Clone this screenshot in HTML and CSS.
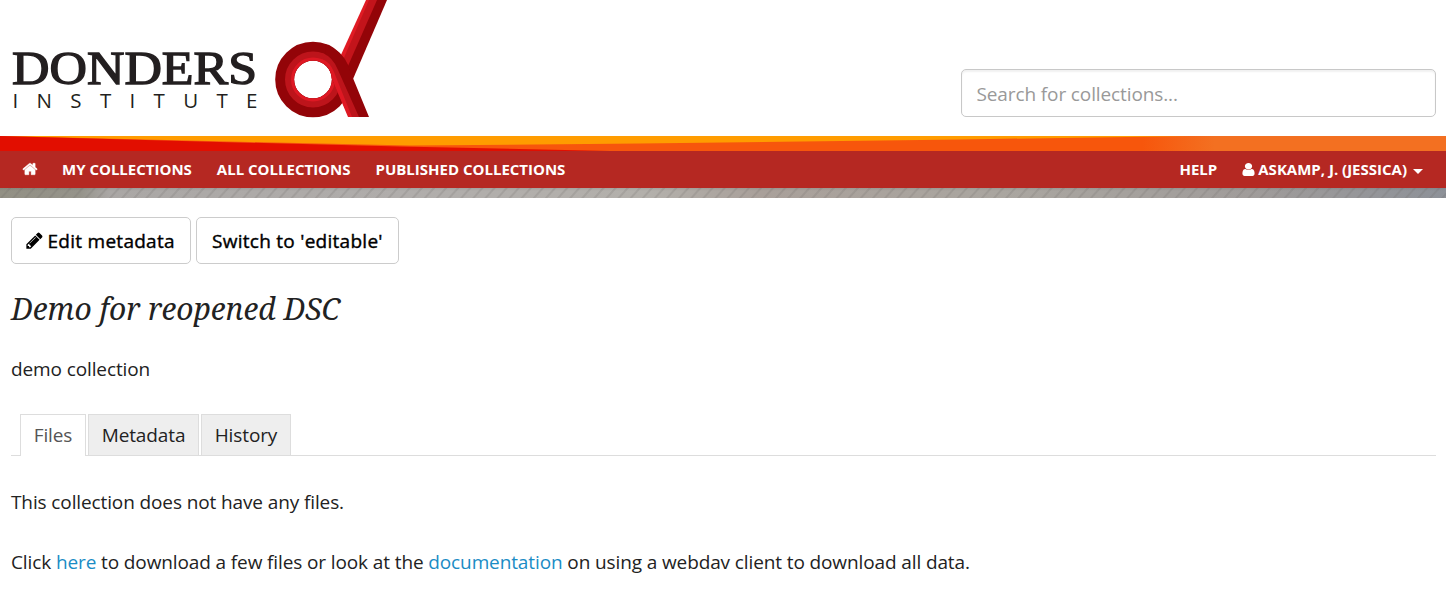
FILE: index.html
```html
<!DOCTYPE html>
<html lang="en">
<head>
<meta charset="utf-8">
<title>Demo for reopened DSC</title>
<link rel="stylesheet" href="styles.css">
</head>
<body>
<header class="masthead">
  <svg class="logo" width="400" height="136" viewBox="0 0 400 136" role="img" aria-label="Donders Institute">
    <text class="logo-name" x="12" y="83.5" textLength="245" lengthAdjust="spacingAndGlyphs">DONDERS</text>
    <text class="logo-sub" x="12.5" y="108" textLength="245">INSTITUTE</text>
    <path fill="#930408" d="M367 0H387L353 79L334 79Z"/>
    <path fill="#e01b24" d="M366 0H370L344 62L340 57Z"/>
    <path fill="#c3141b" d="M369 0H377L348 66L343 60Z"/>
    <circle cx="313" cy="79.5" r="28.3" fill="none" stroke="#930408" stroke-width="19"/>
    <circle cx="313" cy="79.5" r="23.5" fill="none" stroke="#bd141b" stroke-width="9"/>
    <circle cx="313" cy="79.5" r="20.5" fill="none" stroke="#de1823" stroke-width="3"/>
    <path fill="#930408" d="M325 44Q340 49 348 66L369 117H349L332 79Q332 71 326 65Z"/>
    <path fill="#bd141b" d="M322 53Q333 57 338 70L359 117H349L332 79Q332 71 325 64Z"/>
    <path fill="#de1823" d="M322 59Q330 62 334 72L352 117H348L332 79Q332 71 324 63Z"/>
  </svg>
  <input class="search" type="text" placeholder="Search for collections...">
</header>
<svg class="ribbon" width="1446" height="15" viewBox="0 0 1446 15" preserveAspectRatio="none">
  <defs>
    <linearGradient id="flame"><stop offset="0" stop-color="#f7560c"/><stop offset=".79" stop-color="#f7560c"/><stop offset=".84" stop-color="#f37021"/></linearGradient>
  </defs>
  <path fill="#ff9c00" d="M0 0H1200V15H0Z"/>
  <path fill="url(#flame)" d="M0 0L250 6L410 9.5L640 7.5L960 3.5L1190 0H1446V15H0Z"/>
  <path fill="#e20e00" d="M0 0L200 5.5L400 10.5L610 15H0Z"/>
</svg>
<nav class="navbar">
  <a class="home" href="#"><svg width="16" height="16" viewBox="0 0 1792 1792"><path fill="currentColor" stroke="currentColor" stroke-width="50" d="M1472 992v480q0 26-19 45t-45 19h-384v-384h-256v384h-384q-26 0-45-19t-19-45v-480q0-1 .5-3t.5-3l575-474 575 474q1 2 1 6zm223-69l-62 74q-8 9-21 11h-3q-13 0-21-7l-692-577-692 577q-12 8-24 7-13-2-21-11l-62-74q-8-10-7-23.5t11-21.5l719-599q32-26 76-26t76 26l244 204v-195q0-14 9-23t23-9h192q14 0 23 9t9 23v408l219 182q10 8 11 21.5t-7 23.5z"/></svg></a>
  <a href="#">MY COLLECTIONS</a>
  <a href="#">ALL COLLECTIONS</a>
  <a href="#">PUBLISHED COLLECTIONS</a>
  <a class="help" href="#">HELP</a>
  <a class="account" href="#"><svg width="17" height="15" viewBox="0 0 1792 1792" preserveAspectRatio="none"><path fill="currentColor" d="M1536 1399q0 109-62.5 187t-150.5 78h-854q-88 0-150.5-78t-62.5-187q0-85 8.5-160.5t31.5-152 58.5-131 94-89 134.5-34.5q131 128 313 128t313-128q76 0 134.5 34.5t94 89 58.5 131 31.5 152 8.5 160.5zm-256-887q0 159-112.5 271.5t-271.5 112.5-271.5-112.5-112.5-271.5 112.5-271.5 271.5-112.5 271.5 112.5 112.5 271.5z"/></svg><span>ASKAMP, J. (JESSICA)</span><i class="caret"></i></a>
</nav>
<div class="texture"></div>
<main class="content">
  <div class="actions">
    <button class="btn" type="button"><svg width="19" height="19" viewBox="0 0 1792 1792"><path d="M491 1536l91-91-235-235-91 91v107h128v128h107zm523-928q0-22-22-22-10 0-17 7l-542 542q-7 7-7 17 0 22 22 22 10 0 17-7l542-542q7-7 7-17zm-54-192l416 416-832 832h-416v-416zm683 96q0 53-37 90l-166 166-416-416 166-165q36-38 90-38 53 0 91 38l235 234q37 39 37 91z"/></svg><span>Edit metadata</span></button>
    <button class="btn switch" type="button">Switch to 'editable'</button>
  </div>
  <h1 class="title">Demo for reopened DSC</h1>
  <p class="description">demo collection</p>
  <div class="tabs">
    <a class="tab active" href="#">Files</a>
    <a class="tab metadata" href="#">Metadata</a>
    <a class="tab history" href="#">History</a>
  </div>
  <p class="text">This collection does not have any files.</p>
  <p class="text">Click <a href="#">here</a> to download a few files or look at the <a href="#">documentation</a> on using a webdav client to download all data.</p>
</main>
</body>
</html>
```
FILE: styles.css
```css
* { box-sizing: border-box; }
body {
  margin: 0;
  background: #fff;
  color: #222;
  font: 19px/30px "Open Sans", "Noto Sans", sans-serif;
  letter-spacing: -0.115px;
}
a { color: #1a8cc5; text-decoration: none; }
svg { display: block; flex: none; }
.masthead {
  display: flex;
  justify-content: space-between;
  height: 136px;
  padding-right: 10px;
}
.logo-name { font: 47px "Liberation Serif", serif; letter-spacing: 0; fill: #231f20; stroke: #231f20; stroke-width: 1.4px; }
.logo-sub { font: 20.5px "Open Sans", sans-serif; letter-spacing: 0; fill: #231f20; }
.search {
  width: 475px;
  height: 48px;
  margin-top: 69px;
  padding: 2px 15px 0 14.5px;
  border: 1px solid #c8c8c8;
  border-radius: 5px;
  box-shadow: inset 0 2px 2px #0000000f;
  font: 19px "Open Sans", "Noto Sans", sans-serif;
  letter-spacing: -0.115px;
}
.search::placeholder { color: #999; opacity: 1; }
.ribbon { width: 100%; }
.navbar {
  display: flex;
  align-items: center;
  gap: 25px;
  height: 37px;
  padding: 0 23px 2px 22px;
  background: #b52822;
  font-size: 15px;
  font-weight: 700;
  letter-spacing: 0;
  white-space: nowrap;
}
.navbar a { color: #fff; }
.home { width: 15px; padding-top: 1px; }
.help { margin-left: auto; }
.account { display: flex; align-items: center; }
.account svg { margin: 1px 1px 0 -2px; }
.caret {
  margin: 5px 0 0 6px;
  border: 5px solid transparent;
  border-top-color: #fff;
  border-bottom: 0;
}
.texture {
  height: 10px;
  background:
    linear-gradient(#00000012, transparent 3px),
    repeating-linear-gradient(132deg, transparent 0 6px, #6b676430 7px 8px, transparent 9px),
    linear-gradient(90deg, #929084 0, #95938a 80px, #aaa7a5 110px, #b0adab 400px, #b3b0ab 650px, #a9a09a 760px, #aaa6a0 1000px, #a09c9a 1250px, #8d9198 1446px);
}
.content { padding: 19px 10px 0 11px; }
.actions { display: flex; gap: 5px; }
.btn {
  display: flex;
  align-items: center;
  gap: 3.5px;
  width: 180px;
  height: 47px;
  padding: 0 0 0 13px;
  border: 1px solid #ccc;
  border-radius: 5px;
  background: #fff;
  color: #000;
  font: 500 19px "Open Sans", "Noto Sans", sans-serif;
  letter-spacing: 0.27px;
  -webkit-text-stroke: 0.4px #000;
  white-space: nowrap;
}
.switch { width: 203px; padding-left: 15px; }
.title {
  margin: 25px 0 0;
  font: italic 30px/40px "Noto Serif", "Droid Serif", "Liberation Serif", serif;
  letter-spacing: 0;
}
.description { margin: 25px 0 0; }
.tabs {
  display: flex;
  gap: 2px;
  height: 42px;
  margin-top: 30px;
  padding-left: 9px;
  border-bottom: 1px solid #ddd;
}
.tab {
  width: 111px;
  height: 41px;
  border: 1px solid #ddd;
  border-bottom: 0;
  background: #eee;
  color: #222;
  line-height: 40px;
  text-align: center;
}
.active { width: 66px; height: 42px; background: #fff; color: #555; }
.history { width: 90px; }
.text { margin: 31px 0 0; }
.text + .text { margin-top: 30px; }
```
